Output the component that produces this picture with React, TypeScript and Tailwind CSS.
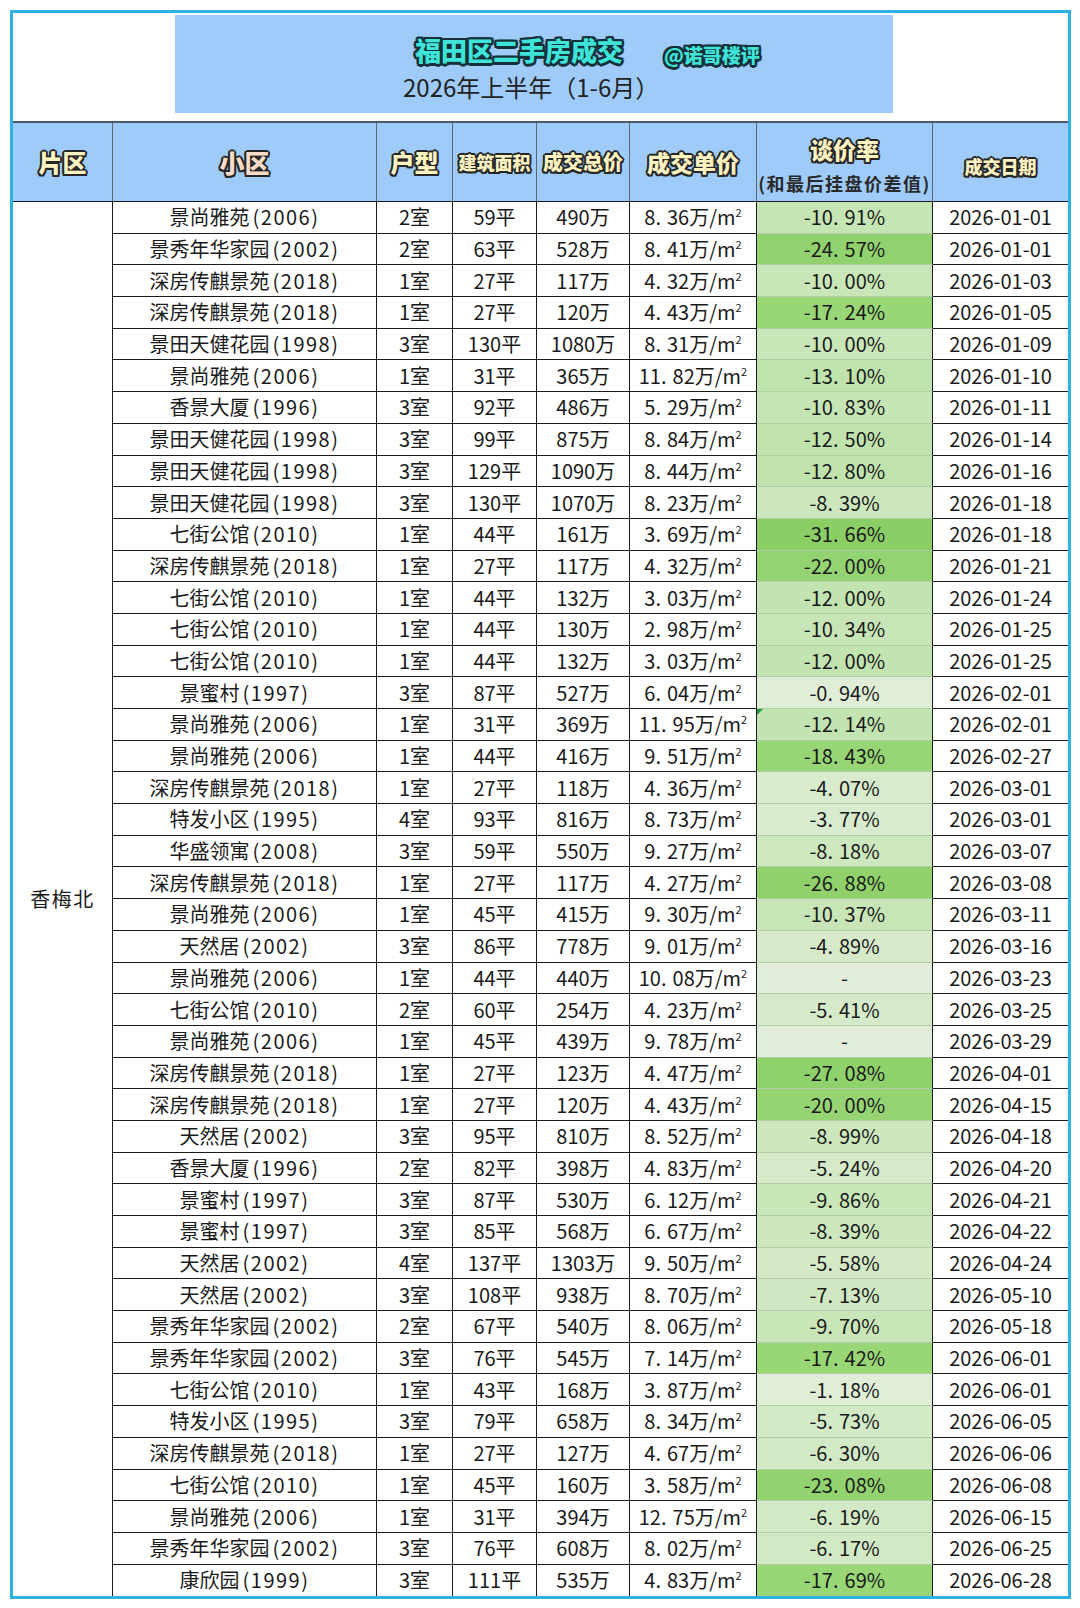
import React from "react";

const ROWS = `景尚雅苑(2006)|2室|59平|490万|8.36|-10.91|2026-01-01
景秀年华家园(2002)|2室|63平|528万|8.41|-24.57|2026-01-01
深房传麒景苑(2018)|1室|27平|117万|4.32|-10.00|2026-01-03
深房传麒景苑(2018)|1室|27平|120万|4.43|-17.24|2026-01-05
景田天健花园(1998)|3室|130平|1080万|8.31|-10.00|2026-01-09
景尚雅苑(2006)|1室|31平|365万|11.82|-13.10|2026-01-10
香景大厦(1996)|3室|92平|486万|5.29|-10.83|2026-01-11
景田天健花园(1998)|3室|99平|875万|8.84|-12.50|2026-01-14
景田天健花园(1998)|3室|129平|1090万|8.44|-12.80|2026-01-16
景田天健花园(1998)|3室|130平|1070万|8.23|-8.39|2026-01-18
七街公馆(2010)|1室|44平|161万|3.69|-31.66|2026-01-18
深房传麒景苑(2018)|1室|27平|117万|4.32|-22.00|2026-01-21
七街公馆(2010)|1室|44平|132万|3.03|-12.00|2026-01-24
七街公馆(2010)|1室|44平|130万|2.98|-10.34|2026-01-25
七街公馆(2010)|1室|44平|132万|3.03|-12.00|2026-01-25
景蜜村(1997)|3室|87平|527万|6.04|-0.94|2026-02-01
景尚雅苑(2006)|1室|31平|369万|11.95|-12.14|2026-02-01
景尚雅苑(2006)|1室|44平|416万|9.51|-18.43|2026-02-27
深房传麒景苑(2018)|1室|27平|118万|4.36|-4.07|2026-03-01
特发小区(1995)|4室|93平|816万|8.73|-3.77|2026-03-01
华盛领寓(2008)|3室|59平|550万|9.27|-8.18|2026-03-07
深房传麒景苑(2018)|1室|27平|117万|4.27|-26.88|2026-03-08
景尚雅苑(2006)|1室|45平|415万|9.30|-10.37|2026-03-11
天然居(2002)|3室|86平|778万|9.01|-4.89|2026-03-16
景尚雅苑(2006)|1室|44平|440万|10.08|-|2026-03-23
七街公馆(2010)|2室|60平|254万|4.23|-5.41|2026-03-25
景尚雅苑(2006)|1室|45平|439万|9.78|-|2026-03-29
深房传麒景苑(2018)|1室|27平|123万|4.47|-27.08|2026-04-01
深房传麒景苑(2018)|1室|27平|120万|4.43|-20.00|2026-04-15
天然居(2002)|3室|95平|810万|8.52|-8.99|2026-04-18
香景大厦(1996)|2室|82平|398万|4.83|-5.24|2026-04-20
景蜜村(1997)|3室|87平|530万|6.12|-9.86|2026-04-21
景蜜村(1997)|3室|85平|568万|6.67|-8.39|2026-04-22
天然居(2002)|4室|137平|1303万|9.50|-5.58|2026-04-24
天然居(2002)|3室|108平|938万|8.70|-7.13|2026-05-10
景秀年华家园(2002)|2室|67平|540万|8.06|-9.70|2026-05-18
景秀年华家园(2002)|3室|76平|545万|7.14|-17.42|2026-06-01
七街公馆(2010)|1室|43平|168万|3.87|-1.18|2026-06-01
特发小区(1995)|3室|79平|658万|8.34|-5.73|2026-06-05
深房传麒景苑(2018)|1室|27平|127万|4.67|-6.30|2026-06-06
七街公馆(2010)|1室|45平|160万|3.58|-23.08|2026-06-08
景尚雅苑(2006)|1室|31平|394万|12.75|-6.19|2026-06-15
景秀年华家园(2002)|3室|76平|608万|8.02|-6.17|2026-06-25
康欣园(1999)|3室|111平|535万|4.83|-17.69|2026-06-28`
  .split("\n")
  .map((line) => line.split("|"));

// dark outline round the header lettering
const OUTLINE =
  "[text-shadow:2px_0_0_#262626,-2px_0_0_#262626,0_2px_0_#262626,0_-2px_0_#262626,1.5px_1.5px_0_#262626,-1.5px_1.5px_0_#262626,1.5px_-1.5px_0_#262626,-1.5px_-1.5px_0_#262626]";
const TITLE_OUTLINE =
  "[text-shadow:2.5px_0_0_#15303a,-2.5px_0_0_#15303a,0_2.5px_0_#15303a,0_-2.5px_0_#15303a,2px_2px_0_#15303a,-2px_2px_0_#15303a,2px_-2px_0_#15303a,-2px_-2px_0_#15303a]";

const mix = (a: number[], b: number[], t: number) =>
  `rgb(${a.map((v, i) => Math.round(v + (b[i] - v) * t)).join(",")})`;

// excel-ish colour scale: light gradient up to -15%, solid green past it
const rateBg = (raw: string) => {
  if (raw === "-") return "#e3eddc";
  const v = Math.abs(parseFloat(raw));
  if (v >= 15) return mix([154, 215, 121], [139, 206, 101], Math.min((v - 15) / 17, 1));
  return mix([227, 239, 219], [189, 226, 169], v / 14);
};

const Dotted = ({ value }: { value: string }) => {
  const [a, b] = value.split(".");
  return (
    <>
      {a}
      <span className="mr-[6px]">.</span>
      {b}
    </>
  );
};

const Name = ({ value }: { value: string }) => {
  const at = value.indexOf("(");
  return (
    <span>
      {value.slice(0, at)}
      <span className="ml-[3px] tracking-[1.5px]">{value.slice(at)}</span>
    </span>
  );
};

const HeadCell = ({ children, className = "" }: { children: React.ReactNode; className?: string }) => (
  <div className={`flex items-center justify-center border-r border-[#5a6570] ${className}`}>{children}</div>
);

const Cell = ({ children }: { children: React.ReactNode }) => (
  <div className="flex items-center justify-center border-r border-b border-[#1a1a1a] leading-none">{children}</div>
);

const App = () => {
  return (
    <div className="min-h-[1608px] bg-white pt-[10px] pl-[10px] font-['Noto_Sans_CJK_SC','Noto_Sans',sans-serif] text-[#1a1a1a]">
      <div className="w-[1061px] border-[3px] border-[#2eb2e6] bg-white">
        {/* title */}
        <div className="h-[108px] pt-[2px] pl-[162px]">
          <div className="flex h-[98px] w-[718px] flex-col bg-[#9ecbf9]">
            <div className="mt-[20px] flex h-[30px] items-center gap-[41px] pl-[240px]">
              <span className={`text-[26px] font-black leading-none text-[#3fe4d8] ${TITLE_OUTLINE}`}>福田区二手房成交</span>
              <span className={`mt-[8px] text-[19px] font-black leading-none text-[#3fe4d8] ${TITLE_OUTLINE}`}>@诺哥楼评</span>
            </div>
            <div className="mt-[7px] h-[30px] pl-[228px] text-[24px] leading-[30px] text-[#222]">2026年上半年（1-6月）</div>
          </div>
        </div>

        {/* header */}
        <div className="grid h-[81px] grid-cols-[100px_264px_76px_84px_93px_127px_176px_1fr] border-t-2 border-b border-t-[#4d5a66] border-b-[#1a1a1a] bg-[#9ecbf9] font-black leading-none">
          <HeadCell>
            <span className={`text-[24px] text-[#fff3c2] ${OUTLINE}`}>片区</span>
          </HeadCell>
          <HeadCell>
            <span className={`text-[25px] text-[#fbdcc6] ${OUTLINE}`}>小区</span>
          </HeadCell>
          <HeadCell>
            <span className={`text-[24px] text-[#fff3c2] ${OUTLINE}`}>户型</span>
          </HeadCell>
          <HeadCell>
            <span className={`text-[18px] text-[#fff3c2] ${OUTLINE}`}>建筑面积</span>
          </HeadCell>
          <HeadCell>
            <span className={`text-[20px] text-[#fff3c2] ${OUTLINE}`}>成交总价</span>
          </HeadCell>
          <HeadCell>
            <span className={`text-[23px] text-[#fff3c2] ${OUTLINE}`}>成交单价</span>
          </HeadCell>
          <div className="flex flex-col items-center gap-[13px] border-r border-[#5a6570] pt-[15px]">
            <span className={`text-[23px] text-[#fff3c2] ${OUTLINE}`}>谈价率</span>
            <span className="whitespace-nowrap text-[18px] font-bold tracking-[1.5px] text-[#2a2a2a]">(和最后挂盘价差值)</span>
          </div>
          <div className="flex items-center justify-center pt-[8px]">
            <span className={`text-[18px] text-[#fff3c2] ${OUTLINE}`}>成交日期</span>
          </div>
        </div>

        {/* body */}
        <div className="flex text-[20px]">
          <div className="flex w-[100px] items-center justify-center border-r border-[#1a1a1a] tracking-[1.5px]">香梅北</div>
          <div className="flex-1">
            {ROWS.map(([name, room, area, total, unit, rate, date], i) => {
              const last = i === ROWS.length - 1;
              return (
                <div
                  key={i}
                  className={`grid h-[31.7px] grid-cols-[264px_76px_84px_93px_127px_176px_1fr] ${last ? "[&>div]:border-b-0" : ""}`}
                >
                  <Cell>
                    <Name value={name} />
                  </Cell>
                  <Cell>{room}</Cell>
                  <Cell>{area}</Cell>
                  <Cell>{total}</Cell>
                  <Cell>
                    <span>
                      <Dotted value={unit} />
                      万/m<span className="align-[8px] text-[11px]">2</span>
                    </span>
                  </Cell>
                  <div
                    className="relative flex items-center justify-center border-r border-b border-r-[#1a1a1a] border-b-[#b3cca6] leading-none"
                    style={{ backgroundColor: rateBg(rate) }}
                  >
                    {rate === "-" ? "-" : <span><Dotted value={rate} />%</span>}
                    {i === 16 && (
                      <span className="absolute top-0 left-0 h-0 w-0 border-t-[6px] border-r-[6px] border-t-[#1f9a3a] border-r-transparent" />
                    )}
                  </div>
                  <div className={`flex items-center justify-center leading-none ${last ? "" : "border-b border-[#1a1a1a]"}`}>{date}</div>
                </div>
              );
            })}
          </div>
        </div>
      </div>
    </div>
  );
};

export default App;
